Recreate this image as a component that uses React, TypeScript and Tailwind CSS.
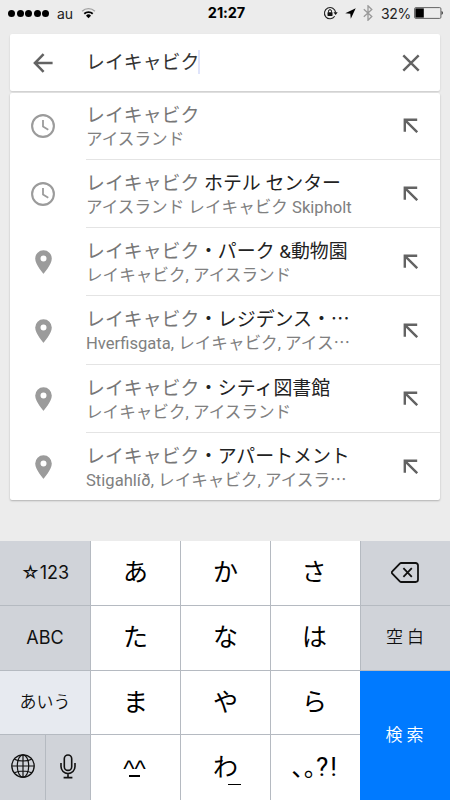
import { type ReactNode } from 'react';
import clsx from 'clsx';

type Suggestion = {
  kind: 'recent' | 'place';
  match: string;
  rest?: string;
  detail: string;
  titleCut?: boolean;
  detailCut?: boolean;
};

const suggestions: Suggestion[] = [
  { kind: 'recent', match: 'レイキャビク', detail: 'アイスランド' },
  { kind: 'recent', match: 'レイキャビク', rest: ' ホテル センター', detail: 'アイスランド レイキャビク Skipholt' },
  { kind: 'place', match: 'レイキャビク', rest: '・パーク &動物園', detail: 'レイキャビク, アイスランド' },
  {
    kind: 'place',
    match: 'レイキャビク',
    rest: '・レジデンス・',
    titleCut: true,
    detail: 'Hverfisgata, レイキャビク, アイス',
    detailCut: true,
  },
  { kind: 'place', match: 'レイキャビク', rest: '・シティ図書館', detail: 'レイキャビク, アイスランド' },
  {
    kind: 'place',
    match: 'レイキャビク',
    rest: '・アパートメント',
    detail: 'Stigahlíð, レイキャビク, アイスラ',
    detailCut: true,
  },
];

function WifiIcon() {
  return (
    <svg aria-hidden="true" viewBox="0 0 16 12" className="h-3 w-[15px]" fill="none">
      <path d="M1.2 4.2a9.6 9.6 0 0 1 13.6 0" stroke="#a3a3a3" strokeWidth="1.5" />
      <path d="M3.5 6.8a6.4 6.4 0 0 1 9 0" stroke="#000" strokeWidth="1.9" />
      <path d="M8 11.6 5.3 8.8a3.8 3.8 0 0 1 5.4 0Z" fill="#000" />
    </svg>
  );
}

function RotationLockIcon() {
  return (
    <svg aria-hidden="true" viewBox="0 0 15 14" className="h-[14px] w-[15px]" fill="none">
      <path d="M11.7 10.3A5.6 5.6 0 1 1 12.6 6.4" stroke="#222" strokeWidth="1.1" />
      <path d="M10.5 6.2h4.2l-2.1 2.7Z" fill="#111" />
      <path d="M5.5 6.5V5.2a1.5 1.5 0 0 1 3 0v1.3" stroke="#111" strokeWidth="1" />
      <rect x="4.5" y="6.2" width="5" height="3.8" rx=".4" fill="#111" />
    </svg>
  );
}

function LocationIcon() {
  return (
    <svg aria-hidden="true" viewBox="0 0 12 12" className="size-[11px]">
      <path d="M11.7.3.3 5.8l5.5.5.5 5.4Z" fill="#000" />
    </svg>
  );
}

function BluetoothIcon() {
  return (
    <svg aria-hidden="true" viewBox="0 0 10 16" className="h-4 w-[10px]" fill="none">
      <path d="m.8 4.3 8 7.2L5 15.2V.8l3.8 3.7-8 7.2" stroke="#999" strokeWidth="1.3" />
    </svg>
  );
}

function BatteryIcon() {
  return (
    <svg aria-hidden="true" viewBox="0 0 30 12" className="h-3 w-[30px]">
      <rect x=".6" y=".6" width="26.3" height="10.8" rx="1.2" fill="none" stroke="#555" strokeWidth=".9" />
      <rect x="1.4" y="1.4" width="8.4" height="9.2" fill="#000" />
      <path d="M27.6 4.1c1.6.3 1.6 3.5 0 3.8Z" fill="#222" />
    </svg>
  );
}

function BackIcon() {
  return (
    <svg aria-hidden="true" viewBox="0 0 20 20" className="size-5" fill="none" stroke="#636363" strokeWidth="2.5">
      <path d="M19.6 10H2.4M10.6 1.2 1.9 10l8.7 8.8" />
    </svg>
  );
}

function ClearIcon() {
  return (
    <svg aria-hidden="true" viewBox="0 0 18 18" className="size-[18px]" fill="none" stroke="#636363" strokeWidth="2.4">
      <path d="m1.3 1.3 15.4 15.4M16.7 1.3 1.3 16.7" />
    </svg>
  );
}

function ClockIcon() {
  return (
    <svg aria-hidden="true" viewBox="0 0 24 24" className="size-6" fill="none" stroke="#9b9b9b">
      <circle cx="12" cy="12" r="10.9" strokeWidth="2.1" />
      <path d="M12 6v6.6l5.3 3.1" strokeWidth="1.8" />
    </svg>
  );
}

function PinIcon() {
  return (
    <svg aria-hidden="true" viewBox="0 0 17 24" className="h-6 w-[17px]">
      <path
        d="M8.5.2A8.3 8.3 0 0 0 .2 8.5c0 6.1 8.3 15.3 8.3 15.3s8.3-9.2 8.3-15.3A8.3 8.3 0 0 0 8.5.2Zm0 5.3a3 3 0 1 1 0 6 3 3 0 0 1 0-6Z"
        fill="#9b9b9b"
      />
    </svg>
  );
}

function InsertIcon() {
  return (
    <svg aria-hidden="true" viewBox="0 0 15 15" className="size-[15px]" fill="none" stroke="#636363" strokeWidth="2.4">
      <path d="M14.2 1.8H1.8v12M1.8 1.8l12.4 12.4" />
    </svg>
  );
}

function DeleteIcon() {
  return (
    <svg
      aria-hidden="true"
      viewBox="0 0 28 21"
      className="h-[21px] w-7"
      fill="none"
      stroke="#111"
      strokeWidth="1.8"
      strokeLinejoin="round"
    >
      <path d="M10.2 1h14.4a2.4 2.4 0 0 1 2.4 2.4v14.2a2.4 2.4 0 0 1-2.4 2.4H10.2c-.6 0-1-.2-1.4-.6L1.3 11.6a1.5 1.5 0 0 1 0-2.2L8.8 1.6c.4-.4.8-.6 1.4-.6Z" />
      <path d="m12.4 6.2 8.4 8.6M20.8 6.2l-8.4 8.6" />
    </svg>
  );
}

function GlobeIcon() {
  return (
    <svg aria-hidden="true" viewBox="0 0 24 24" className="size-6" fill="none" stroke="#111" strokeWidth="1.2">
      <circle cx="12" cy="12" r="11.2" strokeWidth="1.3" />
      <ellipse cx="12" cy="12" rx="5.7" ry="11.2" />
      <path d="M12 .8v22.4M.8 12h22.4M3.4 5.2c4.6 2.4 12.6 2.4 17.2 0M3.4 18.8c4.6-2.4 12.6-2.4 17.2 0" />
    </svg>
  );
}

function MicIcon() {
  return (
    <svg aria-hidden="true" viewBox="0 0 16 25" className="h-[25px] w-4" fill="none" stroke="#111" strokeWidth="1.6">
      <rect x="4.3" y="1" width="7.4" height="15.4" rx="3.7" />
      <path d="M1 9v3.6a7 7 0 0 0 14 0V9M8 19.8v3.7M3.6 23.6h8.8" />
    </svg>
  );
}

function StatusBar() {
  return (
    <header className="flex h-[26px] items-center justify-between pr-1.5 pl-2 font-['Inter','Liberation_Sans',sans-serif] text-[14px] text-[#222]">
      <div className="flex w-[153px] items-center">
        <div className="flex gap-[1.5px]">
          {[0, 1, 2, 3, 4].map((dot) => (
            <span key={dot} className="size-[7px] rounded-full bg-black" />
          ))}
        </div>
        <span className="mr-2 ml-2">au</span>
        <WifiIcon />
      </div>
      <span className="text-[14.5px] font-bold tracking-[-0.1px] text-black">21:27</span>
      <div className="flex w-[152px] items-center justify-end">
        <RotationLockIcon />
        <span className="ml-[7px]">
          <LocationIcon />
        </span>
        <span className="ml-[7px]">
          <BluetoothIcon />
        </span>
        <span className="mr-[3px] ml-2 tracking-[-0.3px]">32%</span>
        <BatteryIcon />
      </div>
    </header>
  );
}

function Ellipsis() {
  return <span className="font-['Noto_Sans_CJK_JP',sans-serif] leading-[0]">…</span>;
}

function SuggestionRow({ item }: { item: Suggestion }) {
  return (
    <li className="group flex h-[68.3px]">
      <div className="flex w-[66px] shrink-0 items-center justify-center">
        {item.kind === 'recent' ? <ClockIcon /> : <PinIcon />}
      </div>
      <div className="ml-[10px] flex flex-1 border-b border-[#e4e4e4] group-last:border-transparent">
        <div className="flex-1 pt-[10px] whitespace-nowrap">
          <p className="h-[26px] text-[18.9px] leading-[27px] text-[#222]">
            <span className="text-[#777]">{item.match}</span>
            {item.rest}
            {item.titleCut && <Ellipsis />}
          </p>
          <p className="h-[23px] text-[16.6px] leading-[23px] text-[#808080]">
            {item.detail}
            {item.detailCut && <Ellipsis />}
          </p>
        </div>
        <div className="flex w-[58px] shrink-0 items-center justify-center pr-px">
          <InsertIcon />
        </div>
      </div>
    </li>
  );
}

function Key({ children, className }: { children: ReactNode; className?: string }) {
  return (
    <button type="button" className={clsx('flex items-center justify-center border-[#b5bac1]', className)}>
      {children}
    </button>
  );
}

function KanaKey({ children, className }: { children: ReactNode; className?: string }) {
  return <Key className={clsx('border-l bg-white text-[25px] text-black', className)}>{children}</Key>;
}

function Keyboard() {
  return (
    <div className="grid h-[259px] grid-cols-5 grid-rows-4 bg-[#d0d3d9] font-['Inter','Noto_Sans_CJK_JP',sans-serif] text-[#111]">
      <Key className="border-b text-[18px]">☆123</Key>
      <KanaKey className="border-b">あ</KanaKey>
      <KanaKey className="border-b">か</KanaKey>
      <KanaKey className="border-b pr-[3px]">さ</KanaKey>
      <Key className="border-b border-l pr-px">
        <DeleteIcon />
      </Key>

      <Key className="border-b text-[18px]">ABC</Key>
      <KanaKey className="border-b">た</KanaKey>
      <KanaKey className="border-b">な</KanaKey>
      <KanaKey className="border-b pr-[2px]">は</KanaKey>
      <Key className="border-b border-l pt-px pl-[3px] text-[17px] font-[350] tracking-[4px]">空白</Key>

      <Key className="border-b bg-[#e7eaf0] text-[17px] font-[350]">あいう</Key>
      <KanaKey className="border-b">ま</KanaKey>
      <KanaKey className="border-b">や</KanaKey>
      <KanaKey className="border-b pr-[2px]">ら</KanaKey>
      <Key className="row-span-2 bg-[#007aff] pl-[3px] text-[17px] font-[350] tracking-[4px] text-white">検索</Key>

      <div className="grid grid-cols-2">
        <Key className="pb-[3px]">
          <GlobeIcon />
        </Key>
        <Key className="border-l pb-[3px]">
          <MicIcon />
        </Key>
      </div>
      <KanaKey>
        <span className="flex flex-col items-center pr-[2px] pb-[3px]">
          <span className="h-[19px] font-['Liberation_Sans',sans-serif] text-[24px] leading-[26px]">^^</span>
          <span className="h-[2px] w-[11px] bg-black" />
        </span>
      </KanaKey>
      <KanaKey>
        <span className="relative">
          わ<span className="absolute right-[-3px] bottom-px h-[1.5px] w-[13px] bg-black" />
        </span>
      </KanaKey>
      <KanaKey>
        <span className="flex items-center pb-1">
          <span className="font-['Noto_Sans_CJK_JP',sans-serif] text-[24px] leading-8">､｡</span>
          <span className="pt-0.5 font-['Roboto',sans-serif] text-[26px] leading-8 tracking-[2px]">?!</span>
        </span>
      </KanaKey>
    </div>
  );
}

export default function App() {
  return (
    <div className="flex h-[800px] w-[450px] flex-col justify-between overflow-hidden bg-[#ececec] font-['Roboto','Noto_Sans_CJK_JP',sans-serif]">
      <div>
        <StatusBar />
        <main className="mx-[10px] mt-2">
          <div className="flex h-[57px] items-center rounded-[2px] bg-white shadow-[0_1px_2px_rgba(0,0,0,0.15)]">
            <button type="button" aria-label="戻る" className="flex w-[66px] justify-center">
              <BackIcon />
            </button>
            <div className="ml-[10px] flex flex-1 items-center text-[18.9px] text-[#333]">
              <span className="pt-px">レイキャビク</span>
              <span className="-ml-px h-6 w-0.5 bg-[#dfe4fb]" />
            </div>
            <button type="button" aria-label="消去" className="flex w-[58px] justify-center">
              <ClearIcon />
            </button>
          </div>
          <ul className="mt-[2px] h-[407px] overflow-hidden rounded-[2px] bg-white shadow-[0_1px_2px_rgba(0,0,0,0.25)]">
            <div className="-mt-[1.5px]">
              {suggestions.map((item, index) => (
                <SuggestionRow key={index} item={item} />
              ))}
            </div>
          </ul>
        </main>
      </div>
      <Keyboard />
    </div>
  );
}
